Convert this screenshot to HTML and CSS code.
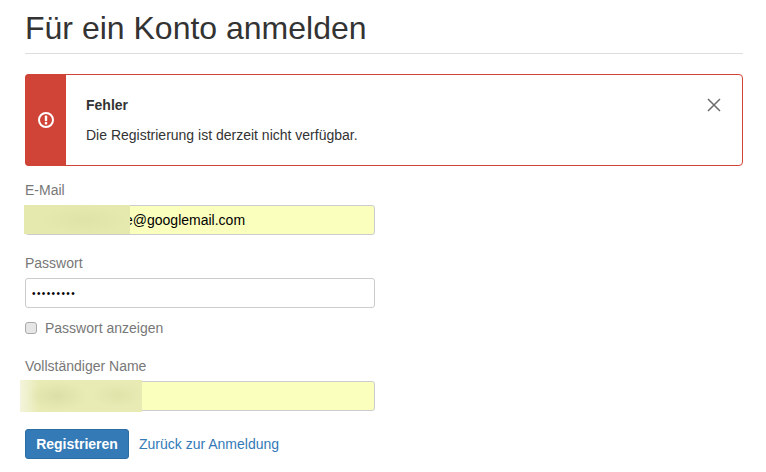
FILE: index.html
```html
<!DOCTYPE html>
<html>
<head>
    <title>Für ein Konto anmelden</title>
    <link rel="stylesheet" href="styles.css">
</head>
<body>
    <div class="content">
        <h1 class="page-title">Für ein Konto anmelden</h1>

        <div class="alert">
            <div class="alert-side">
                <svg class="alert-icon" width="18" height="18" viewBox="0 0 18 18">
                    <circle cx="9" cy="9" r="7" fill="none" stroke="#fff" stroke-width="2"/>
                    <rect x="7.8" y="4.6" width="2.4" height="5.6" rx="0.8" fill="#fff"/>
                    <rect x="7.8" y="11" width="2.4" height="2.4" rx="0.6" fill="#fff"/>
                </svg>
            </div>
            <div class="alert-body">
                <strong class="alert-title">Fehler</strong>
                <p class="alert-text">Die Registrierung ist derzeit nicht verfügbar.</p>
            </div>
            <svg class="alert-close" width="14" height="14" viewBox="0 0 14 14">
                <path d="M1 1L13 13M13 1L1 13" stroke="#6b6b6b" stroke-width="1.5" fill="none"/>
            </svg>
        </div>

        <form class="form">
            <div class="form-group">
                <label class="form-label" for="email">E-Mail</label>
                <div class="field">
                    <input class="form-input autofilled email-input" type="text" id="email" value="e@googlemail.com">
                    <div class="smudge smudge-email"></div>
                </div>
            </div>

            <div class="form-group form-group-check">
                <label class="form-label" for="password">Passwort</label>
                <input class="form-input password-input" type="password" id="password" value="secret123">
                <label class="check">
                    <input type="checkbox">
                    <span>Passwort anzeigen</span>
                </label>
            </div>

            <div class="form-group form-group-last">
                <label class="form-label" for="name">Vollständiger Name</label>
                <div class="field">
                    <input class="form-input autofilled" type="text" id="name">
                    <div class="smudge smudge-name"></div>
                </div>
            </div>

            <div class="actions">
                <button class="btn" type="button">Registrieren</button>
                <a class="back-link" href="#">Zurück zur Anmeldung</a>
            </div>
        </form>
    </div>
</body>
</html>
```

FILE: styles.css
```css
body {
    margin: 0;
    background: #fff;
    font-family: "Liberation Sans", Arial, sans-serif;
    font-size: 14px;
    color: #333;
}
.content {
    width: 718px;
    padding: 0 0 0 25px;
}
.page-title {
    margin: 0;
    padding: 11px 0 7px;
    height: 35px;
    line-height: 35px;
    font-size: 32px;
    font-weight: 400;
    border-bottom: 1px solid #ddd;
}
.alert {
    display: flex;
    align-items: stretch;
    position: relative;
    height: 92px;
    box-sizing: border-box;
    margin-top: 20px;
    border: 1px solid #d04437;
    border-radius: 4px;
}
.alert-side {
    width: 41px;
    margin: -1px 0 -1px -1px;
    background: #d04437;
    border-radius: 4px 0 0 4px;
    display: flex;
    align-items: center;
    justify-content: center;
}
.alert-body {
    padding: 22px 20px 0;
}
.alert-title {
    display: block;
    line-height: 16px;
    font-size: 14px;
}
.alert-text {
    margin: 14px 0 0;
    line-height: 16px;
}
.alert-close {
    position: absolute;
    right: 21px;
    top: 23px;
}
.form {
    padding-top: 16px;
}
.form-group {
    margin-bottom: 20px;
}
.form-group-check {
    margin-bottom: 22px;
}
.form-group-last {
    margin-bottom: 18px;
}
.form-label {
    display: block;
    margin-bottom: 7px;
    line-height: 16px;
    color: #777;
}
.field {
    position: relative;
    width: 350px;
}
.form-input {
    display: block;
    width: 350px;
    height: 30px;
    box-sizing: border-box;
    padding: 0 6px;
    border: 1px solid #ccc;
    border-radius: 3px;
    font-family: inherit;
    font-size: 14px;
    color: #000;
    background: #fff;
}
.autofilled {
    background: #faffbd;
}
.email-input {
    padding-left: 99px;
}
.password-input {
    font-size: 10px;
    letter-spacing: 1.4px;
}
.smudge {
    position: absolute;
}
.smudge-email {
    left: -1px;
    top: 0;
    width: 106px;
    height: 29px;
    background: radial-gradient(ellipse 45px 14px at 60px 15px, #dfe3a8, #e6e9ae);
}
.smudge-name {
    left: -5px;
    top: -1px;
    width: 122px;
    height: 32px;
    background:
        radial-gradient(ellipse 30px 15px at 37px 16px, #dcdfa6, rgba(220, 223, 166, 0)),
        radial-gradient(ellipse 26px 13px at 98px 15px, #e0e4aa, rgba(224, 228, 170, 0)),
        linear-gradient(90deg, #f3f4dc 0, #e8ebb4 16%);
}
.check {
    display: flex;
    align-items: center;
    margin-top: 12px;
    line-height: 16px;
    color: #777;
}
.check input {
    appearance: none;
    box-sizing: border-box;
    width: 12px;
    height: 12px;
    margin: 0 8px 0 0;
    background: #e6e6e6;
    border: 1px solid #aaa;
    border-radius: 3px;
}
.actions {
    display: flex;
    align-items: center;
}
.btn {
    width: 104px;
    height: 30px;
    padding: 0;
    border: 1px solid #2e6da4;
    border-radius: 3px;
    background: #337ab7;
    color: #fff;
    font-family: inherit;
    font-size: 14px;
    font-weight: 700;
}
.back-link {
    margin-left: 10px;
    color: #337ab7;
    text-decoration: none;
}
```
